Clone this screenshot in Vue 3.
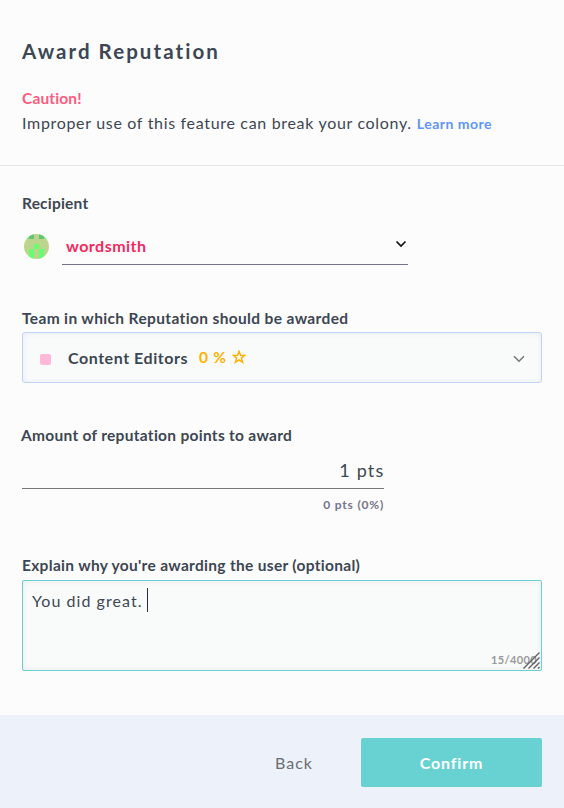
<script setup>
import { ref } from 'vue'

const message = ref('You did great. ')
const points = ref(1)
</script>

<template>
  <main class="dialog">
    <header class="intro">
      <h1 class="title">Award Reputation</h1>
      <p class="caution">Caution!</p>
      <p class="warning">
        <span class="warning-text">Improper use of this feature can break your colony.</span>
        <a class="learn">Learn more</a>
      </p>
    </header>

    <section class="recipient">
      <h2 class="label label-recipient">Recipient</h2>
      <div class="user-row">
        <svg class="avatar" viewBox="0 0 25 25">
          <defs>
            <clipPath id="avatar-clip"><circle cx="12.5" cy="12.5" r="12.5" /></clipPath>
          </defs>
          <g clip-path="url(#avatar-clip)" shape-rendering="crispEdges">
            <rect width="25" height="25" fill="#bbd58c" />
            <path d="M0 0h5v5H0zM20 0h5v5h-5z" fill="#66fd72" />
            <path d="M5 0h5v5H5zM15 0h5v5h-5z" fill="#68c474" />
            <path d="M10 10h5v5h-5zM5 15h5v10H5zM15 15h5v10h-5z" fill="#66fd72" />
          </g>
        </svg>
        <div class="user-select">
          <span class="user-name">wordsmith</span>
          <svg class="chevron-dark" viewBox="0 0 12 8"><path d="M1.5 1.5 6 6l4.500-4.500" /></svg>
        </div>
      </div>
    </section>

    <section class="team">
      <h2 class="label label-team">Team in which Reputation should be awarded</h2>
      <div class="team-select">
        <span class="swatch"></span>
        <span class="team-name">Content Editors</span>
        <span class="percent">0 %</span>
        <svg class="star" viewBox="0 0 14 14">
          <path d="M7 1.300 8.500 5.300 12.700 5.400 9.400 8.100 10.600 12.300 7 9.900 3.400 12.300 4.600 8.100 1.300 5.400 5.500 5.300z" />
        </svg>
        <svg class="chevron-grey" viewBox="0 0 12 8"><path d="M1 1.200 6 6.200l5-5" /></svg>
      </div>
    </section>

    <section class="amount">
      <h2 class="label label-amount">Amount of reputation points to award</h2>
      <div class="amount-field"><span class="points">{{ points }} pts</span></div>
      <div class="amount-note"><span class="note">0 pts (0%)</span></div>
    </section>

    <section class="reason">
      <h2 class="label label-reason">Explain why you're awarding the user (optional)</h2>
      <div class="textarea">
        <span class="message">{{ message }}</span><span class="caret"></span>
        <span class="count">{{ message.length }}/4000</span>
        <svg class="grip" viewBox="0 0 19 19">
          <path d="M1.500 17.500 17.500 1.500M6.500 17.500l11-11M11.500 17.500l6-6M16 17.500l1.500-1.500" />
        </svg>
      </div>
    </section>

    <footer class="actions">
      <button class="back">Back</button>
      <button class="confirm">Confirm</button>
    </footer>
  </main>
</template>

<style>
body {
  margin: 0;
  background: #fcfcfc;
}
</style>

<style scoped>
.dialog {
  box-sizing: border-box;
  width: 564px;
  height: 808px;
  display: flex;
  flex-direction: column;
  background: #fcfcfc;
  color: #3d4753;
  font-family: Lato, "Open Sans", sans-serif;
  font-size: 16px;
  font-variant-ligatures: none;
  white-space: nowrap;
  overflow: hidden;
}
h1, h2, p {
  margin: 0;
}
.intro {
  box-sizing: border-box;
  height: 166px;
  padding: 39px 22px 0;
  border-bottom: 1px solid #e6e7e8;
}
.title {
  font-size: 20.5px;
  line-height: 24px;
  font-weight: 700;
  letter-spacing: 2.050px;
}
.caution {
  margin-top: 24px;
  font-size: 15.5px;
  line-height: 22px;
  font-weight: 700;
  letter-spacing: 0.150px;
  color: #ff5b7e;
}
.warning {
  display: flex;
  align-items: baseline;
  margin-top: 1px;
  line-height: 26px;
  gap: 5px;
}
.warning-text {
  letter-spacing: 0.680px;
}
.learn {
  font-size: 14px;
  font-weight: 700;
  letter-spacing: 0.500px;
  color: #5f95fb;
}
.label {
  font-size: 15.5px;
  line-height: 20px;
  font-weight: 700;
}
.label-recipient {
  letter-spacing: 0.200px;
}
.label-team {
  letter-spacing: 0.360px;
}
.recipient {
  box-sizing: border-box;
  height: 142px;
  padding: 27px 22px 0;
}
.user-row {
  display: flex;
  margin-top: 15px;
}
.avatar {
  width: 25px;
  height: 25px;
  margin: 6px 13px 0 2px;
}
.user-select {
  box-sizing: border-box;
  display: flex;
  justify-content: space-between;
  width: 346px;
  height: 37px;
  padding: 0 1px 0 4px;
  border-bottom: 1px solid #76748b;
}
.user-name {
  line-height: 36px;
  font-weight: 700;
  letter-spacing: 0.480px;
  color: #f5295f;
}
.chevron-dark {
  width: 12px;
  height: 8px;
  margin-top: 12px;
  fill: none;
  stroke: #111;
  stroke-width: 1.7;
}
.team {
  height: 117px;
  padding: 0 22px;
}
.team-select {
  box-sizing: border-box;
  display: flex;
  align-items: center;
  height: 51px;
  margin-top: 4px;
  padding: 0 16px 0 17px;
  border: 1px solid #c2d3f8;
  border-radius: 3px;
  background: #f9fbfa;
  box-shadow: inset 1px 1px 6px rgba(62, 118, 244, 0.06), inset 0 0 5px rgba(0, 0, 0, 0.04);
}
.swatch {
  width: 11px;
  height: 11px;
  margin-top: 3px;
  border-radius: 2px;
  background: #ffb8da;
}
.team-name {
  width: 131px;
  margin-left: 17px;
  font-weight: 700;
  letter-spacing: 0.550px;
}
.percent {
  width: 33px;
  margin-top: -2px;
  font-size: 15.5px;
  font-weight: 700;
  letter-spacing: 0.800px;
  color: #ffb000;
}
.star {
  width: 14px;
  height: 14px;
  margin-top: -1px;
  fill: none;
  stroke: #ffb000;
  stroke-width: 1.5;
}
.chevron-grey {
  width: 12px;
  height: 8px;
  margin-top: 2px;
  margin-left: auto;
  fill: none;
  stroke: #76777b;
  stroke-width: 1.6;
}
.amount {
  height: 130px;
  padding: 0 22px;
}
.label-amount {
  margin-left: -1px;
  letter-spacing: 0.290px;
}
.amount-field {
  box-sizing: border-box;
  width: 362px;
  height: 44px;
  padding-top: 15px;
  border-bottom: 1px solid #77787b;
  text-align: right;
  font-size: 18px;
  line-height: 20px;
}
.points {
  margin-right: -0.500px;
  letter-spacing: 1.200px;
}
.amount-note {
  width: 362px;
  margin-top: 8px;
  text-align: right;
  font-size: 12px;
  line-height: 16px;
  font-weight: 700;
  color: #76748b;
}
.note {
  letter-spacing: 0.800px;
}
.reason {
  height: 160px;
  padding: 0 22px;
}
.label-reason {
  letter-spacing: 0.310px;
}
.textarea {
  box-sizing: border-box;
  position: relative;
  display: flex;
  height: 91px;
  margin-top: 5px;
  padding: 7px 9px;
  border: 1px solid #68d2d2;
  border-radius: 2px;
  background: #f9fbfa;
  box-shadow: inset 0 0 6px rgba(0, 0, 0, 0.07);
}
.message {
  width: 115px;
  line-height: 25px;
  letter-spacing: 1.050px;
}
.caret {
  width: 1px;
  height: 24px;
  background: #282f38;
}
.count {
  position: absolute;
  right: 4px;
  bottom: 2px;
  font-size: 11px;
  line-height: 16px;
  font-weight: 700;
  letter-spacing: 0.380px;
  color: #98999b;
}
.grip {
  position: absolute;
  right: 0;
  bottom: 0;
  width: 19px;
  height: 19px;
  fill: none;
  stroke: #626262;
  stroke-width: 1.4;
}
.actions {
  box-sizing: border-box;
  display: flex;
  justify-content: flex-end;
  height: 93px;
  padding: 23px 22px 0;
  background: #ecf1fa;
}
button {
  border: 0;
  padding: 0;
  font: inherit;
}
.back {
  width: 38px;
  height: 49px;
  margin-right: 48px;
  background: none;
  color: #6b6d73;
  text-align: left;
  letter-spacing: 1px;
}
.confirm {
  width: 181px;
  height: 49px;
  border-radius: 2px;
  background: #68d2d2;
  color: #fff;
  font-weight: 700;
  letter-spacing: 0.850px;
}
</style>
